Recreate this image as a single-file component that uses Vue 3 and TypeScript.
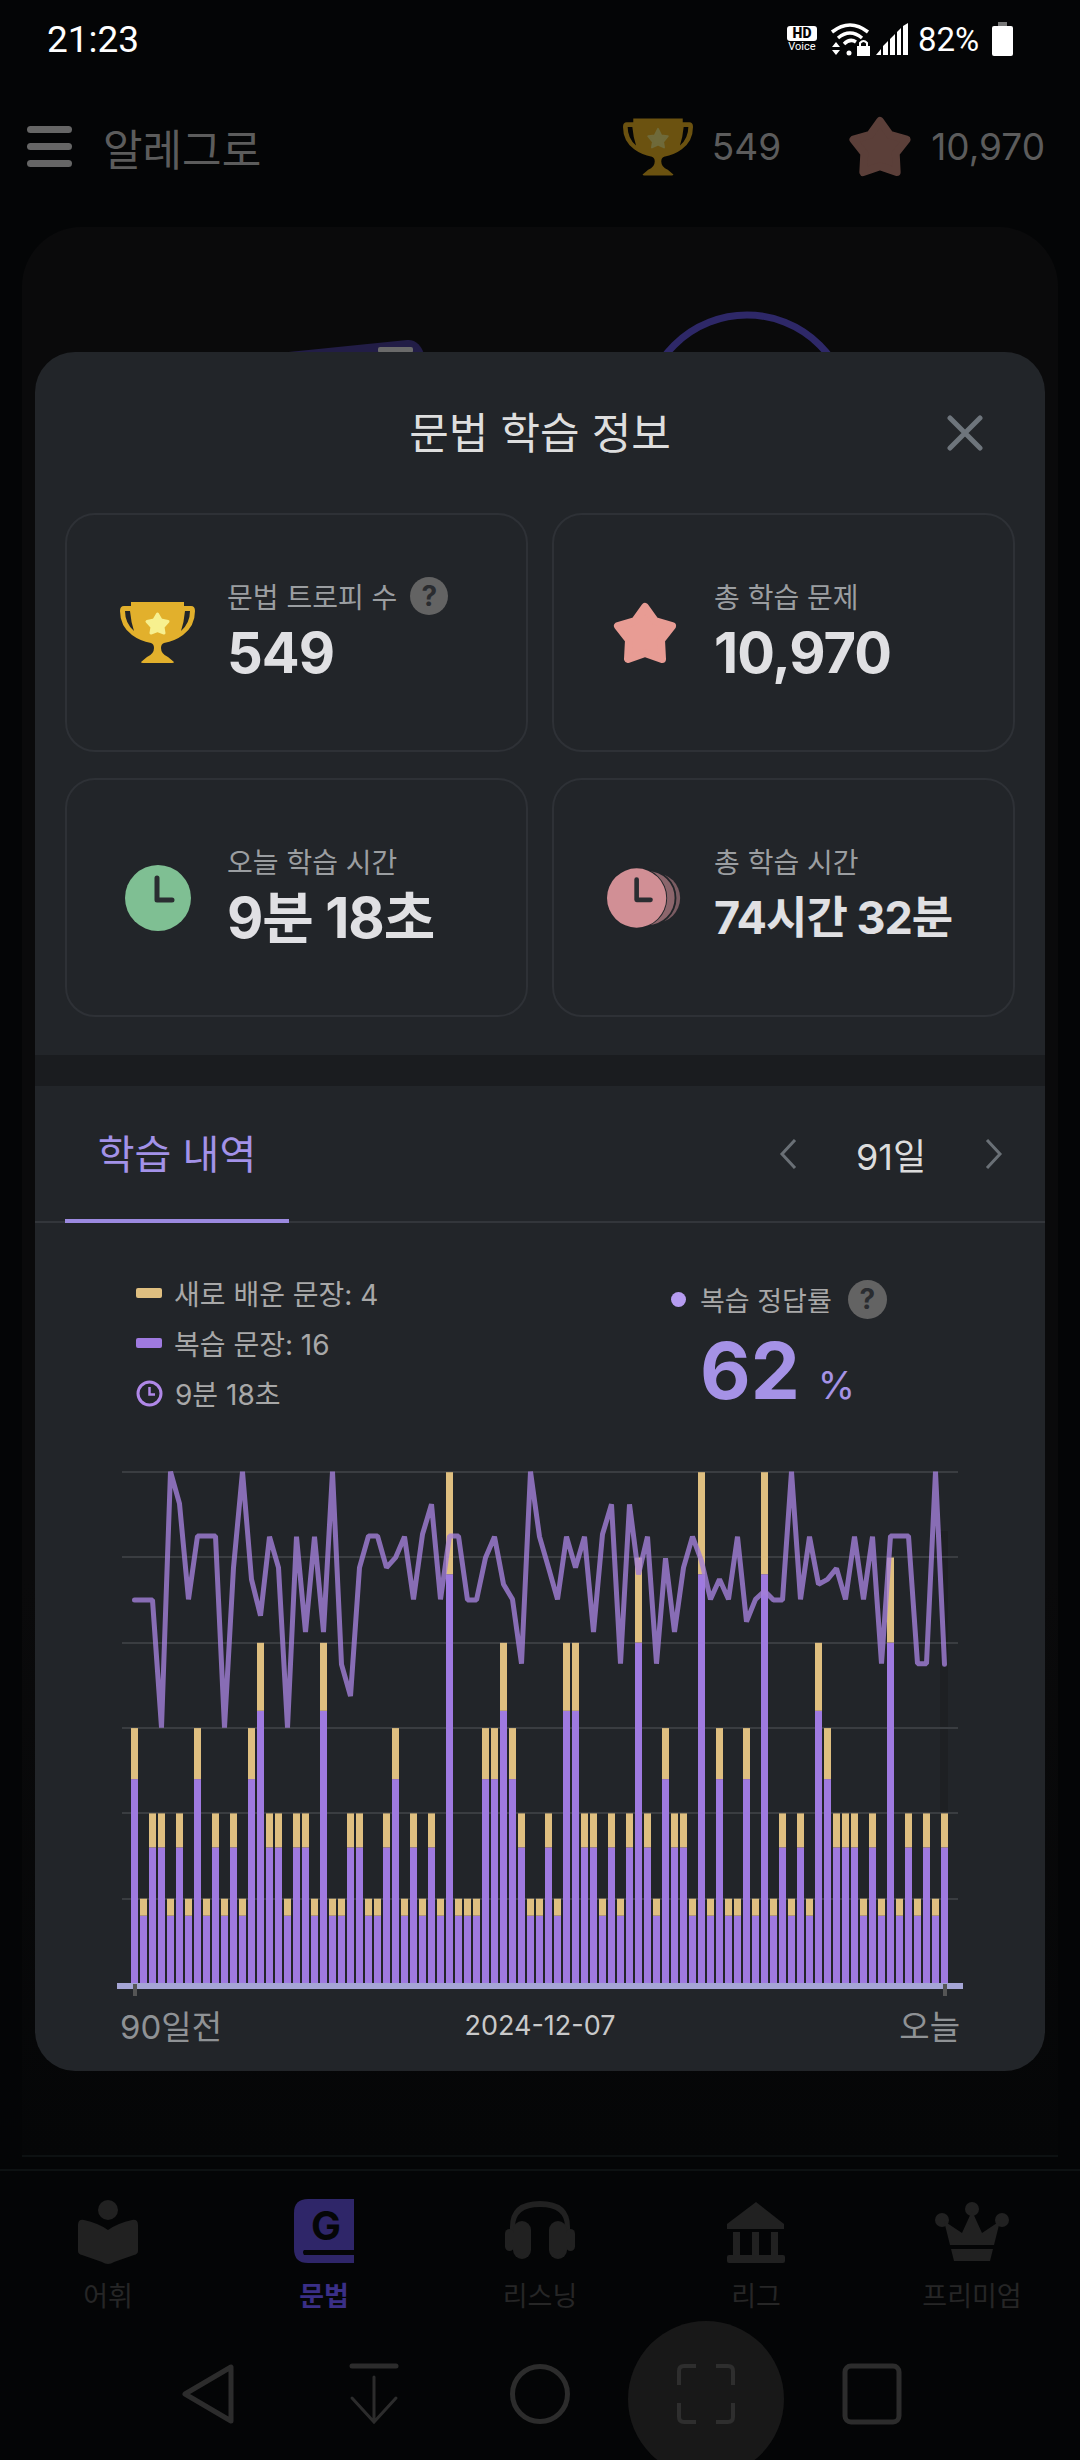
<script setup lang="ts">
const levels: number[] = [
  3, 1, 2, 2, 1, 2, 1, 3, 1, 2, 1, 2, 1, 3, 4, 2, 2, 1, 2, 2, 1, 4, 1, 1, 2, 2, 1, 1, 2, 3,
  1, 2, 1, 2, 1, 6, 1, 1, 1, 3, 3, 4, 3, 2, 1, 1, 2, 1, 4, 4, 2, 2, 1, 2, 1, 2, 5, 2, 1, 3,
  2, 2, 1, 6, 1, 3, 1, 1, 3, 1, 6, 1, 2, 1, 2, 1, 4, 3, 2, 2, 2, 1, 2, 1, 5, 1, 2, 1, 2, 1, 2
]

// rate line, read off the chart in 3x crop units
const rate: number[] = [
  447, 447, 447, 830, 62, 158, 445, 255, 255, 255, 830, 350, 62, 385, 494, 257, 350, 830, 257, 543,
  257, 543, 62, 640, 735, 350, 255, 255, 350, 320, 257, 445, 250, 160, 445, 255, 255, 447, 447, 320,
  257, 400, 445, 638, 62, 257, 350, 445, 257, 350, 257, 543, 250, 160, 638, 160, 370, 257, 638, 322,
  543, 350, 257, 330, 445, 385, 445, 257, 512, 445, 420, 447, 447, 62, 445, 257, 400, 385, 352, 445,
  257, 445, 257, 638, 255, 255, 255, 638, 638, 62, 640
]

const base = 1983
const bars = levels.map((n, i) => ({
  x: 131 + 9 * i,
  reviewTop: base - n * 68.3,
  totalTop: base - n * 85.3,
  review: n * 68.3,
  fresh: n * 17
}))

const linePoints = rate.map((v, i) => `${134.5 + 9 * i},${1450 + v / 3}`).join(' ')
const gridY = [1471, 1556, 1642, 1727, 1812, 1898]

const starPoints = '32,5 42,19 59,24 48,38 49,57 32,51 15,57 16,38 5,24 22,19'
const trophyBody =
  'M11 0H64V4H71Q75 4 75 9Q75 24 63 33Q55 39 44 41Q41 42 41 46Q41 52 48 55L54 60Q54 61 52 61H23Q21 61 21 60L27 55Q34 52 34 46Q34 42 31 41Q20 39 12 33Q0 24 0 9Q0 4 4 4H11ZM5 9Q5 21 14 29Q11 20 10 9ZM70 9Q70 21 61 29Q64 20 65 9Z'

const navItems = [
  { label: '어휘', active: false },
  { label: '문법', active: true },
  { label: '리스닝', active: false },
  { label: '리그', active: false },
  { label: '프리미엄', active: false }
]
</script>

<template>
  <div class="screen">
    <div class="status-bar">
      <span class="clock">21:23</span>
      <div class="status-right">
        <div class="hd">
          <span class="hd-box">HD</span>
          <span class="hd-voice">Voice</span>
        </div>
        <svg class="wifi" width="40" height="33" viewBox="0 0 40 33" fill="none" stroke="#fff">
          <path d="M2 9Q20 -5 38 9" stroke-width="3.5" />
          <path d="M8 15Q20 5 32 15" stroke-width="3.5" />
          <path d="M14 21Q20 15 26 19" stroke-width="3.5" />
          <circle cx="19" cy="30" r="2.5" fill="#fff" stroke="none" />
          <path d="M2 24L6 19L10 24ZM2 27L6 32L10 27Z" fill="#fff" stroke="none" />
          <rect x="27" y="23" width="13" height="10" fill="#fff" stroke="none" />
          <path d="M30 23V20Q33.500 16 37 20V23" stroke-width="2" />
        </svg>
        <svg class="signal" width="32" height="32" viewBox="0 0 32 32" fill="#fff">
          <path d="M0 32L5 26V32ZM7 32V23L12 18V32ZM14 32V16L19 11V32ZM21 32V9L25 5V32ZM27 32V3L32 0V32Z" />
        </svg>
        <span class="battery-text">82%</span>
        <div class="battery"></div>
      </div>
    </div>

    <div class="app-header">
      <div class="burger"><i></i><i></i><i></i></div>
      <span class="app-title">알레그로</span>
      <div class="app-counts">
        <svg width="70" height="58" viewBox="0 0 75 61">
          <path :d="trophyBody" fill="#6b5210" fill-rule="evenodd" />
          <polygon points="37.500,11 41,18 48,19 43,25 44,31 37.500,28 31,31 32,25 27,19 34,18" fill="#6f6a3a" stroke="#6f6a3a" stroke-width="2" stroke-linejoin="round" />
        </svg>
        <span class="count count-trophy">549</span>
        <svg width="64" height="61" viewBox="0 0 64 62">
          <polygon :points="starPoints" fill="#5b3f39" stroke="#5b3f39" stroke-width="8" stroke-linejoin="round" />
        </svg>
        <span class="count">10,970</span>
      </div>
    </div>

    <div class="backdrop">
      <div class="back-card">
        <svg class="back-art" width="900" height="130" viewBox="0 0 900 130" fill="none">
          <path d="M218 130L385 113Q398 112 403 130Z" fill="#221d46" />
          <rect x="356" y="120" width="35" height="6" rx="2" fill="#6a6a6a" />
          <circle cx="725" cy="191" r="103" stroke="#2e2868" stroke-width="7" />
        </svg>
      </div>
    </div>

    <nav class="tabbar">
      <div v-for="(item, i) in navItems" :key="item.label" class="tab-item" :class="{ active: item.active }">
        <svg width="76" height="66" viewBox="0 0 76 66" class="tab-icon">
          <g v-if="i === 0" fill="#212121">
            <circle cx="38" cy="11" r="10" />
            <path d="M8 26Q8 20 14 21Q28 24 38 31Q48 24 62 21Q68 20 68 26V52Q68 55 64 56L44 63Q38 67 32 63L12 56Q8 55 8 52Z" />
          </g>
          <g v-else-if="i === 1">
            <path d="M22 0H68V64H22Q8 64 8 50V14Q8 0 22 0Z" fill="#2f2669" />
            <path d="M18 51H68V56H18Q16 53 18 51Z" fill="#050607" />
            <text x="40" y="41" text-anchor="middle" class="g-letter">G</text>
          </g>
          <g v-else-if="i === 2" fill="#212121">
            <path d="M8 36V28Q8 2 38 2Q68 2 68 28V36H63V28Q63 8 38 8Q13 8 13 28V36Z" />
            <rect x="11" y="22" width="18" height="38" rx="9" />
            <rect x="47" y="22" width="18" height="38" rx="9" />
            <rect x="3" y="30" width="9" height="22" rx="4.500" />
            <rect x="64" y="30" width="9" height="22" rx="4.500" />
          </g>
          <g v-else-if="i === 3" fill="#212121">
            <path d="M38 3L66 25V30H9V25Z" />
            <rect x="15" y="33" width="7" height="24" />
            <rect x="34" y="33" width="7" height="24" />
            <rect x="53" y="33" width="7" height="24" />
            <rect x="9" y="56" width="58" height="8" rx="2" />
          </g>
          <g v-else fill="#212121">
            <circle cx="38" cy="10" r="7" />
            <circle cx="8" cy="21" r="7" />
            <circle cx="68" cy="21" r="7" />
            <path d="M38 12L48 34L66 22L60 46H16L10 22L28 34Z" />
            <path d="M17 50H59L56 62H20Z" />
          </g>
        </svg>
        <span class="tab-label">{{ item.label }}</span>
      </div>
    </nav>

    <div class="system-nav">
      <div class="sys-item">
        <svg width="54" height="62" viewBox="0 0 54 62" fill="none" stroke="#2c2c2c" stroke-width="5" stroke-linejoin="round">
          <path d="M50 4V58L4 31Z" />
        </svg>
      </div>
      <div class="sys-item">
        <svg width="50" height="62" viewBox="0 0 50 62" fill="none" stroke="#2c2c2c" stroke-linecap="round">
          <path d="M3 3H47" stroke-width="5" />
          <path d="M25 14V58M3 35L25 59L47 35" stroke-width="3" />
        </svg>
      </div>
      <div class="sys-item">
        <svg width="60" height="62" viewBox="0 0 60 62" fill="none" stroke="#2c2c2c" stroke-width="5">
          <circle cx="30" cy="31" r="27.500" />
        </svg>
      </div>
      <div class="sys-item sys-capture">
        <div class="capture-disc"></div>
        <svg class="capture-icon" width="60" height="62" viewBox="0 0 60 62" fill="none" stroke="#2e2e2e" stroke-width="4">
          <path d="M3 22V8Q3 3 8 3H20M40 3H52Q57 3 57 8V22M57 40V54Q57 59 52 59H40M20 59H8Q3 59 3 54V40" />
        </svg>
      </div>
      <div class="sys-item">
        <svg width="60" height="62" viewBox="0 0 60 62" fill="none" stroke="#2c2c2c" stroke-width="5">
          <rect x="3" y="3" width="54" height="56" rx="6" />
        </svg>
      </div>
    </div>

    <div class="modal">
      <div class="modal-head">
        <span></span>
        <h2 class="modal-title">문법 학습 정보</h2>
        <svg class="close" width="36" height="36" viewBox="0 0 36 36" stroke="#6e757c" stroke-width="5" stroke-linecap="round">
          <path d="M3 3L33 33M33 3L3 33" />
        </svg>
      </div>

      <div class="stats">
        <div class="stat">
          <div class="stat-icon">
            <svg width="75" height="61" viewBox="0 0 75 61">
              <path :d="trophyBody" fill="#e2b02c" fill-rule="evenodd" />
              <polygon points="37.500,12 41,18 48,19.500 43,25 44,31 37.500,28.500 31,31 32,25 27,19.500 34,18" fill="#f7f08f" stroke="#f7f08f" stroke-width="3" stroke-linejoin="round" />
            </svg>
          </div>
          <div class="stat-text">
            <div class="stat-label">문법 트로피 수 <span class="help help-sm">?</span></div>
            <div class="stat-value">549</div>
          </div>
        </div>
        <div class="stat">
          <div class="stat-icon">
            <svg width="64" height="62" viewBox="0 0 64 62">
              <polygon :points="starPoints" fill="#e89c94" stroke="#e89c94" stroke-width="8" stroke-linejoin="round" />
            </svg>
          </div>
          <div class="stat-text">
            <div class="stat-label">총 학습 문제</div>
            <div class="stat-value">10,970</div>
          </div>
        </div>
        <div class="stat">
          <div class="stat-icon">
            <svg width="66" height="66" viewBox="0 0 66 66">
              <circle cx="33" cy="33" r="33" fill="#7fbf93" />
              <path d="M32 13V35H47" fill="none" stroke="#2a2d31" stroke-width="5" stroke-linecap="round" stroke-linejoin="round" />
            </svg>
          </div>
          <div class="stat-text">
            <div class="stat-label">오늘 학습 시간</div>
            <div class="stat-value">9분 18초</div>
          </div>
        </div>
        <div class="stat">
          <div class="stat-icon">
            <svg width="81" height="66" viewBox="0 0 81 66">
              <circle cx="52" cy="33" r="27" fill="#7a5c62" />
              <circle cx="44" cy="33" r="30" fill="#8c666c" stroke="#222529" stroke-width="2" />
              <circle cx="32" cy="33" r="33" fill="#222529" />
              <circle cx="32" cy="33" r="32" fill="#d18f95" />
              <path d="M32 13V35H47" fill="none" stroke="#2a2d31" stroke-width="5" stroke-linecap="round" stroke-linejoin="round" />
            </svg>
          </div>
          <div class="stat-text">
            <div class="stat-label">총 학습 시간</div>
            <div class="stat-value stat-value-sm">74시간 32분</div>
          </div>
        </div>
      </div>

      <div class="band"></div>

      <div class="tabs">
        <div class="tab-on">학습 내역</div>
        <div class="pager">
          <svg width="18" height="30" viewBox="0 0 18 30" fill="none" stroke="#6a7076" stroke-width="3">
            <path d="M16 1L3 15L16 29" />
          </svg>
          <span class="pager-text">91일</span>
          <svg width="18" height="30" viewBox="0 0 18 30" fill="none" stroke="#6a7076" stroke-width="3">
            <path d="M2 1L15 15L2 29" />
          </svg>
        </div>
      </div>

      <div class="legend">
        <div class="legend-list">
          <div class="legend-row"><i class="swatch swatch-new"></i>새로 배운 문장: 4</div>
          <div class="legend-row"><i class="swatch swatch-review"></i>복습 문장: 16</div>
          <div class="legend-row">
            <svg width="27" height="27" viewBox="0 0 27 27" fill="none" stroke="#b088e8" stroke-width="3">
              <circle cx="13.500" cy="13.500" r="11.500" />
              <path d="M13.500 7V14.500H19" stroke-width="2.500" />
            </svg>
            9분 18초
          </div>
        </div>
        <div class="rate">
          <div class="rate-head">
            <i class="rate-dot"></i>
            <span>복습 정답률</span>
            <span class="help">?</span>
          </div>
          <div class="rate-value">62<span class="rate-unit">%</span></div>
        </div>
      </div>

      <svg class="chart" width="846" height="532" viewBox="117 1468 846 532">
        <rect x="940" y="1530" width="8" height="282" fill="#1e2023" />
        <line v-for="y in gridY" :key="y" x1="122" x2="958" :y1="y" :y2="y" stroke="#3a3d41" stroke-width="2" />
        <g v-for="b in bars" :key="b.x">
          <rect :x="b.x" :y="b.reviewTop" width="7" :height="b.review" fill="#9f7ae0" />
          <rect :x="b.x" :y="b.totalTop" width="7" :height="b.fresh" fill="#dfbf80" />
        </g>
        <rect x="117" y="1982" width="846" height="6" fill="#a5a5d5" />
        <rect x="133" y="1983" width="4" height="12" fill="#555" />
        <rect x="943" y="1983" width="4" height="12" fill="#555" />
        <polyline :points="linePoints" fill="none" stroke="#a27fd8" stroke-opacity="0.8" stroke-width="5" stroke-linejoin="bevel" stroke-linecap="round" />
      </svg>

      <div class="axis">
        <span class="axis-end">90일전</span>
        <span class="axis-date">2024-12-07</span>
        <span class="axis-end axis-today">오늘</span>
      </div>
    </div>
  </div>
</template>

<style>
html,
body {
  margin: 0;
  background: #040506;
}
</style>

<style scoped>
.screen {
  position: relative;
  display: flex;
  flex-direction: column;
  width: 1080px;
  height: 2460px;
  overflow: hidden;
  background: #040506;
  font-family: Inter, "Noto Sans CJK KR", sans-serif;
}

.status-bar {
  display: flex;
  justify-content: space-between;
  align-items: center;
  height: 78px;
  padding: 0 67px 0 47px;
  color: #fff;
  font-family: Roboto, sans-serif;
}

.clock {
  font-size: 37px;
}

.status-right {
  display: flex;
  align-items: center;
}

.hd {
  display: flex;
  flex-direction: column;
  align-items: center;
  width: 30px;
  margin-right: 13px;
}

.hd-box {
  width: 30px;
  height: 15px;
  border-radius: 3px;
  background: #fff;
  color: #040506;
  font-size: 14px;
  font-weight: 900;
  line-height: 15px;
  text-align: center;
}

.hd-voice {
  font-size: 11px;
  line-height: 12px;
}

.wifi {
  margin-right: 6px;
}

.signal {
  margin-right: 10px;
}

.battery-text {
  width: 64px;
  font-size: 33px;
}

.battery {
  position: relative;
  width: 21px;
  height: 30px;
  margin: 4px 0 0 10px;
  border-radius: 2px;
  background: #fff;
}

.battery::before {
  content: "";
  position: absolute;
  top: -4px;
  left: 6px;
  width: 9px;
  height: 4px;
  background: #777;
}

.app-header {
  display: flex;
  align-items: center;
  height: 149px;
  padding: 0 35px 12px 27px;
  box-sizing: border-box;
  color: #5c5c5c;
}

.burger {
  display: flex;
  flex-direction: column;
  gap: 10px;
  width: 45px;
  margin-right: 31px;
}

.burger i {
  height: 7px;
  border-radius: 4px;
  background: #666;
}

.app-title {
  font-size: 43px;
}

.app-counts {
  display: flex;
  align-items: center;
  margin-left: auto;
}

.count {
  font-size: 37px;
  margin-left: 19px;
}

.count-trophy {
  margin-right: 67px;
}

.backdrop {
  flex: 1;
  padding: 0 22px;
}

.back-card {
  position: relative;
  height: 100%;
  border-radius: 60px 60px 0 0;
  border-bottom: 2px solid #0d1112;
  box-sizing: border-box;
  background: linear-gradient(#0a0a0b 70%, #050607);
  overflow: hidden;
}

.back-art {
  position: absolute;
  top: 0;
  left: 0;
}

.tabbar {
  display: flex;
  justify-content: center;
  height: 159px;
  margin-top: 12px;
  padding-top: 28px;
  box-sizing: border-box;
  border-top: 2px solid #0d1112;
  color: #262626;
  background: #040506;
}

.tab-item {
  display: flex;
  flex-direction: column;
  align-items: center;
  width: 216px;
}

.tab-label {
  margin-top: 16px;
  font-size: 27px;
  line-height: 32px;
}

.tab-item.active {
  color: #3a2f86;
  font-weight: 700;
}

.g-letter {
  fill: #050607;
  font-size: 40px;
  font-weight: 700;
}

.system-nav {
  display: flex;
  justify-content: center;
  align-items: center;
  height: 132px;
  box-sizing: border-box;
  background: #040506;
}

.sys-item {
  position: relative;
  display: flex;
  justify-content: center;
  width: 166px;
}

.capture-disc {
  position: absolute;
  top: -42px;
  left: 5px;
  width: 156px;
  height: 156px;
  border-radius: 50%;
  background: #181818;
}

.capture-icon {
  position: relative;
}

.modal {
  position: absolute;
  top: 352px;
  left: 35px;
  width: 1010px;
  height: 1719px;
  border-radius: 40px;
  background: #222529;
  overflow: hidden;
}

.modal-head {
  display: grid;
  grid-template-columns: 1fr auto 1fr;
  align-items: center;
  height: 161px;
}

.modal-title {
  margin: 0;
  color: #dedede;
  font-size: 43px;
  font-weight: 400;
  line-height: 160px;
}

.close {
  justify-self: end;
  margin-right: 62px;
}

.stats {
  display: grid;
  grid-template-columns: 463px 463px;
  grid-auto-rows: 239px;
  gap: 26px 24px;
  padding-left: 30px;
}

.stat {
  display: flex;
  align-items: center;
  padding-left: 53px;
  border: 2px solid #2e3136;
  border-radius: 30px;
  box-sizing: border-box;
}

.stat-icon {
  display: flex;
  justify-content: center;
  width: 75px;
  flex: none;
  margin-right: 32px;
}

.stat-label {
  display: flex;
  align-items: center;
  gap: 13px;
  height: 36px;
  color: #9b9ea1;
  font-size: 28px;
}

.stat-value {
  margin-top: 4px;
  color: #e0e0e3;
  font-size: 56px;
  font-weight: 700;
  line-height: 70px;
  letter-spacing: -1px;
  white-space: nowrap;
}

.stat-value-sm {
  font-size: 45px;
}

.help {
  display: inline-flex;
  justify-content: center;
  align-items: center;
  width: 39px;
  height: 39px;
  border-radius: 50%;
  background: #636363;
  color: #2a2c30;
  font-size: 28px;
  font-weight: 700;
}

.help-sm {
  width: 38px;
  height: 38px;
}

.band {
  height: 31px;
  margin-top: 38px;
  background: #1a1c1f;
}

.tabs {
  display: flex;
  justify-content: space-between;
  height: 137px;
  box-sizing: border-box;
  border-bottom: 2px solid #33363b;
}

.tab-on {
  width: 224px;
  height: 137px;
  margin-left: 30px;
  box-sizing: border-box;
  border-bottom: 4px solid #9c8ae0;
  color: #a392e8;
  font-size: 40px;
  line-height: 138px;
  text-align: center;
}

.pager {
  display: flex;
  align-items: center;
  height: 135px;
  margin-right: 42px;
}

.pager-text {
  width: 188px;
  color: #dcdcdc;
  font-size: 36px;
  text-align: center;
}

.legend {
  display: flex;
  height: 246px;
  padding: 45px 0 0 101px;
  box-sizing: border-box;
}

.legend-list {
  display: flex;
  flex-direction: column;
  color: #a8a8a8;
  font-size: 28px;
}

.legend-row {
  display: flex;
  align-items: center;
  gap: 12px;
  height: 50px;
}

.swatch {
  width: 26px;
  height: 10px;
  border-radius: 2px;
}

.swatch-new {
  background: #dfbf80;
}

.swatch-review {
  background: #9f7ae0;
}

.rate {
  margin-left: auto;
  width: 374px;
  padding-top: 9px;
}

.rate-head {
  display: flex;
  align-items: center;
  height: 44px;
  color: #a8a8a8;
  font-size: 27px;
}

.rate-dot {
  width: 15px;
  height: 15px;
  margin-right: 14px;
  border-radius: 50%;
  background: #b69cf0;
}

.rate-head .help {
  margin-left: 16px;
}

.rate-value {
  margin: 8px 0 0 29px;
  color: #a592e6;
  font-size: 78px;
  font-weight: 700;
  line-height: 84px;
}

.rate-unit {
  margin-left: 18px;
  font-size: 38px;
  font-weight: 400;
}

.chart {
  display: block;
  margin-left: 82px;
}

.axis {
  display: grid;
  grid-template-columns: 1fr auto 1fr;
  align-items: center;
  width: 840px;
  height: 40px;
  margin-left: 85px;
}

.axis-end {
  color: #8f9295;
  font-size: 33px;
}

.axis-today {
  justify-self: end;
}

.axis-date {
  color: #c9c9c9;
  font-size: 27px;
}
</style>
